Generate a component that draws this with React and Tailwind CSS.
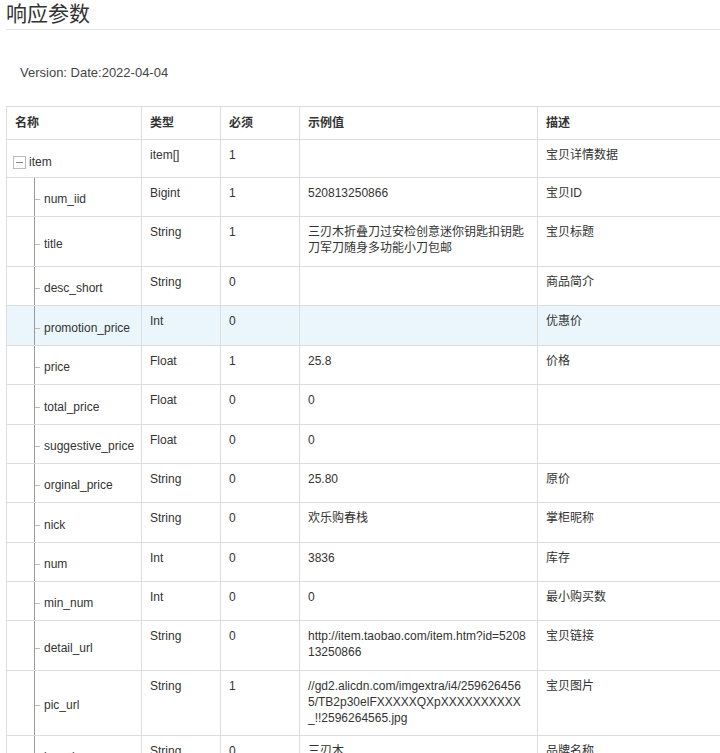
import React from 'react'

const rows = [
  ['num_iid', 'Bigint', '1', '520813250866', '宝贝ID', 38],
  ['title', 'String', '1', '三刃木折叠刀过安检创意迷你钥匙扣钥匙刀军刀随身多功能小刀包邮', '宝贝标题', 49],
  ['desc_short', 'String', '0', '', '商品简介', 38],
  ['promotion_price', 'Int', '0', '', '优惠价', 39, true],
  ['price', 'Float', '1', '25.8', '价格', 38],
  ['total_price', 'Float', '0', '0', '', 39],
  ['suggestive_price', 'Float', '0', '0', '', 38],
  ['orginal_price', 'String', '0', '25.80', '原价', 38],
  ['nick', 'String', '0', '欢乐购春栈', '掌柜昵称', 39],
  ['num', 'Int', '0', '3836', '库存', 38],
  ['min_num', 'Int', '0', '0', '最小购买数', 38],
  ['detail_url', 'String', '0', 'http://item.taobao.com/item.htm?id=520813250866', '宝贝链接', 49],
  ['pic_url', 'String', '1', '//gd2.alicdn.com/imgextra/i4/2596264565/TB2p30elFXXXXXQXpXXXXXXXXXX_!!2596264565.jpg', '宝贝图片', 64],
  ['brand', 'String', '0', '三刃木', '品牌名称', 38],
]

const td = 'border border-[#dddddd] align-top px-2 pt-[7px] leading-[16px] break-all'

export default function App() {
  return (
    <div className="w-[720px] h-[753px] overflow-hidden bg-white text-[#333] font-[family-name:Liberation_Sans,Noto_Sans_CJK_SC,sans-serif]">
      <div className="pl-[6px] pt-[1px]">
        <h2 className="text-[21px] leading-[26px] text-[#333]">响应参数</h2>
        <div className="h-px bg-[#e5e5e5] mt-[2px]" />
      </div>
      <div className="pl-[20px] pt-[35px] text-[13px] leading-[16px] text-[#444]">Version: Date:2022-04-04</div>
      <div className="pl-[6px] pt-[25px]">
        <table className="table-fixed border-collapse text-[12px] w-[740px]">
          <colgroup>
            <col className="w-[135px]" />
            <col className="w-[79px]" />
            <col className="w-[79px]" />
            <col className="w-[238px]" />
            <col />
          </colgroup>
          <thead>
            <tr className="h-[33px]">
              {['名称', '类型', '必须', '示例值', '描述'].map((h) => (
                <th key={h} className="border border-[#dddddd] px-2 text-left font-bold align-middle">{h}</th>
              ))}
            </tr>
          </thead>
          <tbody>
            <tr className="h-[38px]">
              <td className="border border-[#dddddd] px-[6px] align-middle pt-[4px] leading-[16px]">
                <span className="inline-flex items-center gap-[3px]">
                  <span className="w-[13px] h-[13px] border border-[#bbb] flex items-center justify-center">
                    <span className="w-[7px] h-px bg-[#888]" />
                  </span>
                  item
                </span>
              </td>
              <td className={td}>item[]</td>
              <td className={td}>1</td>
              <td className={td}></td>
              <td className={td}>宝贝详情数据</td>
            </tr>
            {rows.map(([n, t, r, ex, d, h, hl]) => (
              <tr key={n} className={hl ? 'bg-[#eaf6fb]' : ''} style={{ height: h }}>
                <td className="border border-[#dddddd] p-0 align-middle leading-[16px]">
                  <div className="relative flex items-center pl-[37px] pt-[4px]" style={{ height: h }}>
                    <span className="absolute left-[27px] top-0 bottom-0 w-px bg-[#999]" />
                    <span className="absolute left-[28px] top-1/2 mt-[2px] w-[5px] h-px bg-[#bbb]" />
                    {n}
                  </div>
                </td>
                <td className={td}>{t}</td>
                <td className={td}>{r}</td>
                <td className={td}>{ex}</td>
                <td className={td}>{d}</td>
              </tr>
            ))}
          </tbody>
        </table>
      </div>
    </div>
  )
}
